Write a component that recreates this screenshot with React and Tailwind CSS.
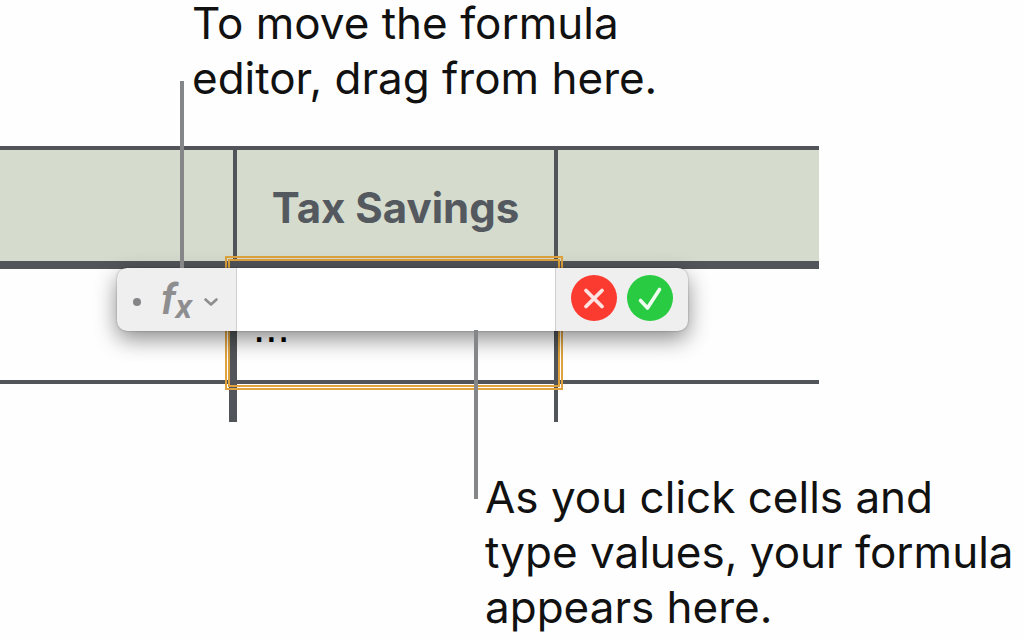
import { useState } from 'react'

function Caption({ className, children }) {
  return (
    <p className={`relative text-[44px] leading-[55px] whitespace-nowrap text-[#111111] ${className}`}>
      {children}
    </p>
  )
}

function FormulaEditor() {
  const [formula, setFormula] = useState('')

  return (
    <form
      onSubmit={(e) => e.preventDefault()}
      className="absolute left-[117px] top-[122px] flex h-[63px] w-[571px] overflow-hidden rounded-[10px] bg-[#efefef] shadow-[0_8px_22px_rgba(0,0,0,0.45),0_0_2px_rgba(0,0,0,0.35)]"
    >
      <div className="flex w-[120px] shrink-0 items-center border-r border-[#cfcfd2] pt-1 pl-4 text-[#8e8e90]">
        <span className="h-2 w-2 rounded-full bg-[#858587]" />
        <button type="button" aria-label="Formula options" className="ml-5 flex items-center font-['Roboto',sans-serif] font-semibold italic">
          <span className="pb-1 text-[42px] leading-[48px]">f</span>
          <span className="pt-2 text-[34px] leading-[48px]">x</span>
          <svg viewBox="0 0 14 8" className="ml-3 h-2 w-[14px]" fill="none" stroke="currentColor" strokeWidth="2.6" strokeLinecap="round" strokeLinejoin="round">
            <path d="M1.500 1.500 7 6.500 12.500 1.500" />
          </svg>
        </button>
      </div>
      <input
        type="text"
        aria-label="Formula"
        value={formula}
        onChange={(e) => setFormula(e.target.value)}
        className="min-w-0 flex-1 bg-white px-4 text-[34px] outline-none"
      />
      <div className="flex w-[133px] shrink-0 items-center gap-[10px] border-l border-[#cfcfd2] pl-[15px] pb-1">
        <button type="button" aria-label="Cancel" onClick={() => setFormula('')} className="h-[46px] w-[46px] rounded-full bg-[#fc3b30]">
          <svg viewBox="0 0 46 46" className="h-full w-full" fill="none" stroke="#fde4e2" strokeWidth="3.8" strokeLinecap="round">
            <path d="M15 15.500 31 31.500M31 15.500 15 31.500" />
          </svg>
        </button>
        <button type="submit" aria-label="Accept" className="h-[46px] w-[46px] rounded-full bg-[#28cb41]">
          <svg viewBox="0 0 46 46" className="h-full w-full" fill="none" stroke="#effcf0" strokeWidth="3.6" strokeLinecap="round" strokeLinejoin="round">
            <path d="M13.500 25.500 20.500 33 32.500 14.500" />
          </svg>
        </button>
      </div>
    </form>
  )
}

export default function App() {
  return (
    <main className="min-h-screen bg-[#fefefe] font-['Inter',sans-serif]">
      <Caption className="z-10 -mt-1 ml-[192px]">
        To move the formula
        <br />
        editor, drag from here.
        <span className="absolute -left-3 top-[85px] h-[187px] w-1 bg-[#858687]" />
      </Caption>

      <section className="relative mt-10">
        <table className="w-4/5 table-fixed border-separate border-spacing-0">
          <colgroup>
            <col className="w-[237px]" />
            <col className="w-[321px]" />
            <col />
          </colgroup>
          <thead>
            <tr className="h-[123px] bg-[#d5dccd] text-[42px] text-[#54585f]">
              <td className="border-t-4 border-r-4 border-b-8 border-[#515559]" />
              <th scope="col" className="border-t-4 border-r-4 border-b-8 border-[#515559] p-0 pt-1 text-center leading-[55px] font-bold">
                Tax Savings
              </th>
              <td className="border-t-4 border-b-8 border-[#515559]" />
            </tr>
          </thead>
          <tbody>
            <tr className="h-[115px]">
              <td className="border-r-8 border-b-4 border-[#515559]" />
              <td className="relative border-r-4 border-b-4 border-[#515559] p-0 pt-1 pl-4 font-['Liberation_Sans',sans-serif] text-[44px] leading-[55px] text-black">
                ...
                <span className="absolute -top-[13px] -right-[9px] -bottom-[10px] -left-3 border-[5px] border-double border-[#dfa23d]" />
              </td>
              <td className="border-b-4 border-[#515559]" />
            </tr>
            <tr className="h-[38px]">
              <td className="border-r-8 border-[#515559]" />
              <td className="border-r-4 border-[#515559]" />
              <td />
            </tr>
          </tbody>
        </table>
        <FormulaEditor />
      </section>

      <Caption className="mt-12 ml-[485px]">
        As you click cells and
        <br />
        type values, your formula
        <br />
        appears here.
        <span className="absolute -left-[11px] -top-[140px] h-[169px] w-1 bg-[#858687]" />
      </Caption>
    </main>
  )
}
